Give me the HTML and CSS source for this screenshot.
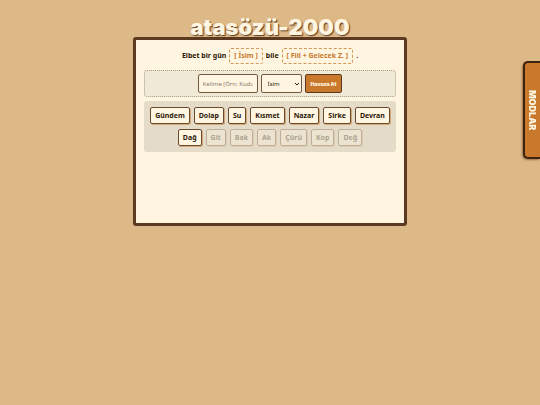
FILE: index.html
```
<!DOCTYPE html>
<html lang="tr">
<head>
<meta charset="utf-8">
<meta name="viewport" content="width=device-width, initial-scale=1">
<title>atasözü-2000</title>
<link rel="stylesheet" href="styles.css">
</head>
<body>
<div class="page">
  <h1 class="title">atasözü-2000</h1>
  <main class="card">
    <p class="sentence">
      <span>Elbet bir gün</span>
      <span class="slot">[ İsim ]</span>
      <span>bile</span>
      <span class="slot">[ Fiil + Gelecek Z. ]</span>
      <span>.</span>
    </p>
    <form class="adder">
      <input class="field word" type="text" placeholder="Kelime (Örn: Kudur)" aria-label="Kelime">
      <span class="picker">
        <select class="field kind" aria-label="Tür">
          <option>İsim</option>
          <option>Fiil</option>
        </select>
        <svg class="chevron" viewBox="0 0 6 4" aria-hidden="true"><path d="M1 1l2 2 2-2"/></svg>
      </span>
      <button class="add" type="button">Havuza At</button>
    </form>
    <div class="pool">
      <button class="chip" type="button">Gündem</button>
      <button class="chip" type="button">Dolap</button>
      <button class="chip" type="button">Su</button>
      <button class="chip" type="button">Kısmet</button>
      <button class="chip" type="button">Nazar</button>
      <button class="chip" type="button">Sirke</button>
      <button class="chip" type="button">Devran</button>
      <button class="chip" type="button">Dağ</button>
      <button class="chip" type="button" disabled>Git</button>
      <button class="chip" type="button" disabled>Bak</button>
      <button class="chip" type="button" disabled>Ak</button>
      <button class="chip" type="button" disabled>Çürü</button>
      <button class="chip" type="button" disabled>Kop</button>
      <button class="chip" type="button" disabled>Değ</button>
    </div>
  </main>
</div>
<button class="modes" type="button">MODLAR</button>
</body>
</html>
```

FILE: styles.css
```
* {
  box-sizing: border-box;
}

body {
  margin: 0;
  min-height: 100vh;
  background: #ddb987;
  color: #2c1808;
  font-family: "Noto Sans", "Open Sans", sans-serif;
  font-size: 7px;
}

button,
input,
select {
  margin: 0;
  font: inherit;
  color: inherit;
}

.page {
  display: flex;
  flex-direction: column;
  align-items: center;
  padding-top: 18px;
}

.title {
  position: relative;
  margin: 0;
  color: #fff5e1;
  font-family: Inter, sans-serif;
  font-size: 22px;
  font-weight: 900;
  line-height: 19px;
  text-shadow: 1px 1px 1px #5c3a21;
}

.card {
  width: 100%;
  max-width: 274px;
  min-height: 189px;
  padding: 8px;
  border: 3px solid #5c3a21;
  border-radius: 3px;
  background: #fff5e1;
}

.sentence {
  display: flex;
  justify-content: center;
  align-items: center;
  gap: 3px;
  margin: 0 0 6px;
  font-weight: 700;
  line-height: 14px;
}

.slot {
  padding: 0 4px;
  border: 1px dashed #d3995a;
  border-radius: 2px;
  color: #c67a2e;
}

.adder {
  display: flex;
  justify-content: center;
  align-items: center;
  gap: 3px;
  margin-bottom: 4px;
  padding: 3px;
  border: 1px dotted #a99d86;
  border-radius: 3px;
  background: #f0e9d6;
}

.field {
  height: 19px;
  padding: 0 4px;
  border: 1px solid #76583f;
  border-radius: 2px;
  background: #fff5e1;
  font-size: 6px;
}

.word {
  width: 60px;
}

.word::placeholder {
  color: #887d70;
}

.picker {
  position: relative;
  display: flex;
}

.kind {
  width: 41px;
  padding: 0 6px;
  appearance: none;
}

.chevron {
  position: absolute;
  top: 8px;
  right: 2px;
  width: 6px;
  height: 4px;
  fill: none;
  stroke: #2c1808;
  pointer-events: none;
}

.add {
  height: 19px;
  padding: 0 5px;
  border: 1px solid #5c3a21;
  border-radius: 2px;
  background: #c9792b;
  color: #fff5e1;
  font-family: Inter, sans-serif;
  font-size: 5px;
  font-weight: 900;
}

.pool {
  display: flex;
  flex-wrap: wrap;
  justify-content: center;
  gap: 5px 4px;
  padding: 6px 3px;
  border-radius: 3px;
  background: #e4dcc9;
}

.chip {
  height: 17px;
  padding: 0 4px;
  border: 1px solid #6b4a30;
  border-radius: 2px;
  background: #fff5e1;
  box-shadow: 1px 1px 0 #d2a974;
  font-weight: 700;
  line-height: 14px;
}

.chip:disabled {
  opacity: 0.3;
}

.modes {
  position: fixed;
  top: 61px;
  right: 0;
  padding: 27px 2px;
  border: 2px solid #3e2210;
  border-right: 0;
  border-radius: 5px 0 0 5px;
  background: #c9792b;
  box-shadow: -1px 1px 2px #9b7448;
  color: #fff5e1;
  font-family: Inter, sans-serif;
  font-size: 9px;
  font-weight: 900;
  line-height: 11px;
  writing-mode: vertical-rl;
}
```
